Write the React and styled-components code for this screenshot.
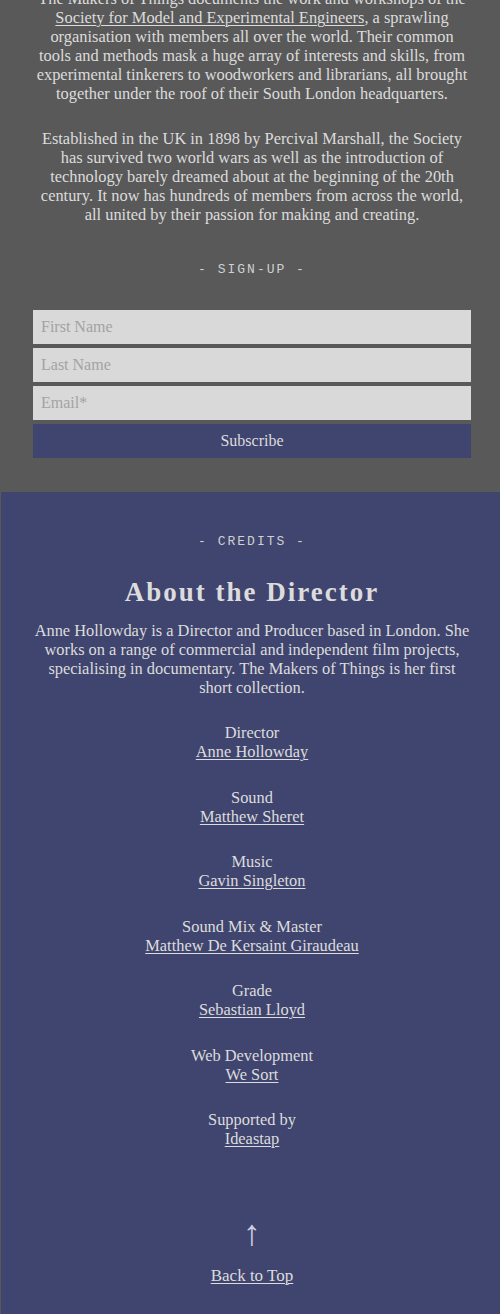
import React from 'react';
import styled, { createGlobalStyle } from 'styled-components';

const GlobalStyle = createGlobalStyle`
	html, body {
		margin: 0;
		padding: 0;
		background: #40456f;
	}
	body {
		font-family: 'Liberation Serif', 'Times New Roman', serif;
		color: #dcdcdc;
	}
`;

const Intro = styled.section`
	background: #595959;
	padding: 0 29px 34px 33px;
	text-align: center;
`;

const Credits = styled.section`
	background: #40456f;
	border-left: 1px solid #595959;
	padding: 40px 29px 30px 32px;
	text-align: center;
`;

const Paragraph = styled.p`
	font-size: 16.4px;
	line-height: 19px;
	margin: ${(p) => (p.first ? '-11px 0 26px' : '0 0 26px')};
	color: #dcdcdc;
`;

const TextLink = styled.a`
	color: #dcdcdc;
	text-decoration: underline;
	text-underline-offset: 2px;
	text-decoration-thickness: 1px;
`;

const Label = styled.div`
	font-family: 'Liberation Mono', 'DejaVu Sans Mono', monospace;
	font-size: 13px;
	letter-spacing: 2px;
	color: #d0d0d0;
	line-height: 19px;
	margin: ${(p) => p.margin || '0'};
`;

const Form = styled.form`
	display: flex;
	flex-direction: column;
	gap: 4px;
`;

const Input = styled.input`
	box-sizing: border-box;
	height: 34px;
	border: none;
	background: #d9d9d9;
	padding: 0 8px;
	font-family: 'Liberation Serif', 'Times New Roman', serif;
	font-size: 16px;
	color: #333;
	outline: none;
	&::placeholder {
		color: #a3a3a3;
	}
`;

const Button = styled.button`
	height: 34px;
	border: none;
	background: #40456f;
	color: #dcdcdc;
	font-family: 'Liberation Serif', 'Times New Roman', serif;
	font-size: 16px;
	cursor: pointer;
`;

const Heading = styled.h2`
	font-size: 27px;
	font-weight: bold;
	letter-spacing: 2px;
	line-height: 30px;
	margin: 0 0 14px;
	color: #dcdcdc;
`;

const CreditList = styled.div`
	display: flex;
	flex-direction: column;
	gap: 26.5px;
	margin-top: 18px;
`;

const CreditItem = styled.div`
	font-size: 16.4px;
	line-height: 19px;
	display: flex;
	flex-direction: column;
	align-items: center;
`;

const Arrow = styled.div`
	font-size: 36px;
	line-height: 30px;
	margin-top: 70px;
	font-weight: 300;
	color: #cfcfe0;
`;

const BackLink = styled(TextLink)`
	display: inline-block;
	font-size: 17px;
	line-height: 19px;
	margin-top: 18px;
`;

const credits = [
	['Director', 'Anne Hollowday'],
	['Sound', 'Matthew Sheret'],
	['Music', 'Gavin Singleton'],
	['Sound Mix & Master', 'Matthew De Kersaint Giraudeau'],
	['Grade', 'Sebastian Lloyd'],
	['Web Development', 'We Sort'],
	['Supported by', 'Ideastap'],
];

const App = () => {
	return (
		<>
			<GlobalStyle />
			<Intro>
				<Paragraph first>
					The Makers of Things documents the work and workshops of the{' '}
					<TextLink href='#'>Society for Model and Experimental Engineers</TextLink>, a
					sprawling organisation with members all over the world. Their common tools and
					methods mask a huge array of interests and skills, from experimental tinkerers to
					woodworkers and librarians, all brought together under the roof of their South
					London headquarters.
				</Paragraph>
				<Paragraph>
					Established in the UK in 1898 by Percival Marshall, the Society has survived two
					world wars as well as the introduction of technology barely dreamed about at the
					beginning of the 20th century. It now has hundreds of members from across the
					world, all united by their passion for making and creating.
				</Paragraph>
				<Label margin='36px 0 31px'>- SIGN-UP -</Label>
				<Form onSubmit={(e) => e.preventDefault()}>
					<Input type='text' placeholder='First Name' />
					<Input type='text' placeholder='Last Name' />
					<Input type='email' placeholder='Email*' />
					<Button type='submit'>Subscribe</Button>
				</Form>
			</Intro>
			<Credits>
				<Label margin='0 0 26px'>- CREDITS -</Label>
				<Heading>About the Director</Heading>
				<Paragraph>
					Anne Hollowday is a Director and Producer based in London. She works on a range of
					commercial and independent film projects, specialising in documentary. The Makers
					of Things is her first short collection.
				</Paragraph>
				<CreditList>
					{credits.map(([role, name]) => (
						<CreditItem key={role}>
							<span>{role}</span>
							<TextLink href='#'>{name}</TextLink>
						</CreditItem>
					))}
				</CreditList>
				<Arrow>↑</Arrow>
				<BackLink href='#'>Back to Top</BackLink>
			</Credits>
		</>
	);
};

export default App;
